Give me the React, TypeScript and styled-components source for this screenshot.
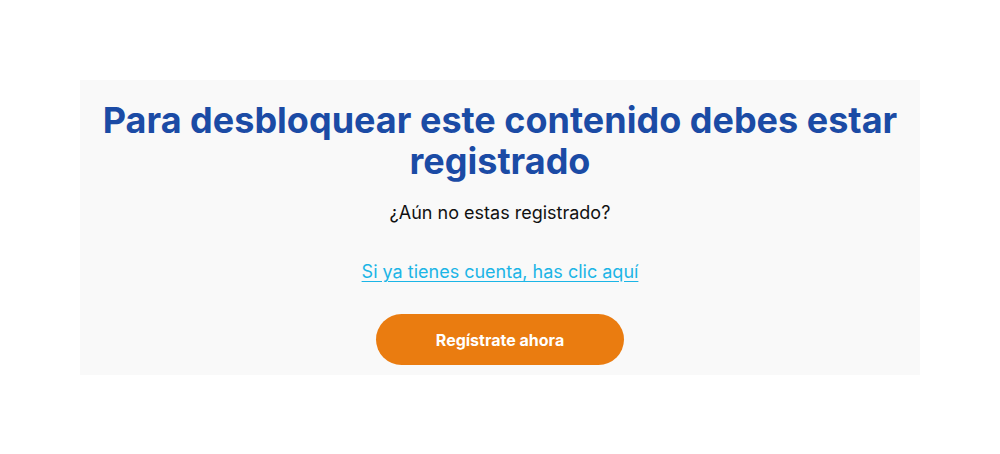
import React from "react";
import styled, { createGlobalStyle } from "styled-components";

const Global = createGlobalStyle`
  html, body { margin: 0; padding: 0; background: #ffffff; }
  body { font-family: Inter, "Noto Sans", sans-serif; }
`;

const Page = styled.div`
  width: 1000px;
  height: 454px;
  padding: 80px 80px 0;
  box-sizing: border-box;
`;

const Panel = styled.section`
  background: #f9f9f9;
  display: flex;
  flex-direction: column;
  align-items: center;
  padding: 20px 20px 10px;
  box-sizing: border-box;
`;

const Heading = styled.h2`
  margin: 0;
  font-family: Inter, sans-serif;
  font-weight: 700;
  font-size: 36px;
  line-height: 41px;
  color: #1b4ba5;
  text-align: center;
`;

const Subtitle = styled.p`
  margin: 17px 0 0;
  font-size: 18px;
  line-height: 27px;
  color: #111111;
`;

const LoginLink = styled.a`
  margin-top: 32px;
  font-size: 18px;
  line-height: 27px;
  color: #1cb5e6;
  text-decoration: underline;
  text-underline-offset: 3px;
  cursor: pointer;
`;

const CtaButton = styled.button`
  margin-top: 29px;
  flex-shrink: 0;
  width: 248px;
  height: 51px;
  border: none;
  border-radius: 26px;
  background: #ea7c10;
  color: #ffffff;
  font-family: Inter, sans-serif;
  font-weight: 700;
  font-size: 16px;
  cursor: pointer;
`;

export default function App() {
  return (
    <>
      <Global />
      <Page>
        <Panel>
          <Heading>
            Para desbloquear este contenido debes estar
            <br />
            registrado
          </Heading>
          <Subtitle>¿Aún no estas registrado?</Subtitle>
          <LoginLink>Si ya tienes cuenta, has clic aquí</LoginLink>
          <CtaButton>Regístrate ahora</CtaButton>
        </Panel>
      </Page>
    </>
  );
}
